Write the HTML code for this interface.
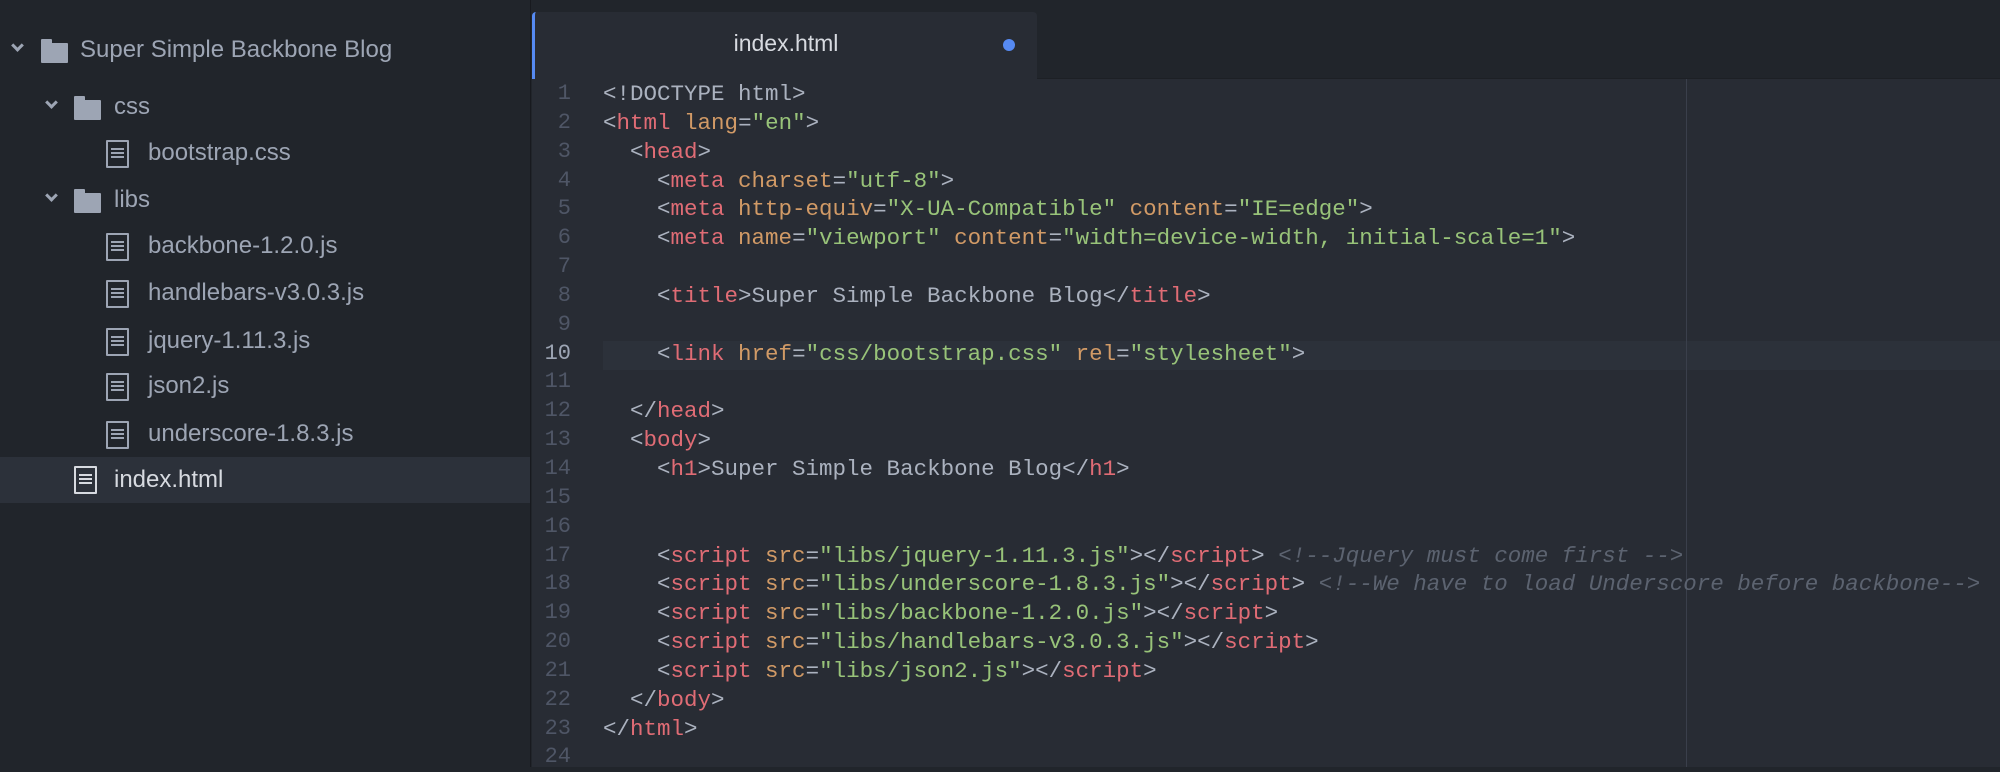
<!DOCTYPE html>
<html><head><meta charset="utf-8"><style>
*{margin:0;padding:0;box-sizing:border-box}
body{width:2000px;height:767px;overflow:hidden;background:#21252b;position:relative;font-family:"Liberation Sans",sans-serif}
#side{position:absolute;left:0;top:0;width:531px;height:767px;background:#21252b;border-right:1px solid #181a1f}
.it{position:absolute;left:0;width:530px;height:46px;color:#9da5b4;font-size:24px;line-height:46px;white-space:nowrap}
.it span{position:absolute}
.sel{background:#2c313a;color:#d7dae0}
.chev{position:absolute;width:9px;height:9px;border-right:3px solid #9da5b4;border-bottom:3px solid #9da5b4;transform:rotate(45deg)}
.fold{position:absolute;width:27px;height:20px;background:#9da5b4;border-radius:1px}
.fold:before{content:"";position:absolute;left:0;top:-4px;width:11px;height:5px;background:#9da5b4;border-radius:1px 1px 0 0}
.file{position:absolute;width:23px;height:28px;border:2px solid #9da5b4;border-radius:1px}
.file:after{content:"";position:absolute;left:3px;right:3px;top:6px;height:12px;background:repeating-linear-gradient(#9da5b4 0 2px,transparent 2px 4px)}
.sel .file{border-color:#d7dae0}.sel .file:after{background:repeating-linear-gradient(#d7dae0 0 2px,transparent 2px 4px)}
#tabbar{position:absolute;left:532px;top:0;right:0;height:79px;background:#21252b;border-bottom:1px solid #1d2025}
#tab{position:absolute;left:532px;top:12px;width:505px;height:68px;background:#282c34;border-radius:4px 4px 0 0;border-left:3px solid #568af2;color:#d7dae0;font-size:23px;text-align:center;line-height:62px}
#dot{position:absolute;left:1003px;top:39px;width:12px;height:12px;border-radius:50%;background:#568af2}
#ed{position:absolute;left:532px;top:79px;right:0;bottom:0;background:#282c34}
#guide{position:absolute;left:1686px;top:79px;width:1px;bottom:0;background:#3a3f4b}
#hl{position:absolute;left:603px;right:0;top:341px;height:29px;background:#2c313a}
#nums{position:absolute;left:532px;width:39px;top:80px;text-align:right;font-family:"Liberation Mono",monospace;font-size:22px;line-height:28.85px;color:#4f5666}
#code{position:absolute;left:603px;top:80px;font-family:"Liberation Mono",monospace;font-size:22.5px;line-height:28.85px;color:#abb2bf;white-space:pre}
.t{color:#e06c75}.a{color:#d19a66}.s{color:#98c379}.c{color:#5c6370;font-style:italic}
</style></head><body>
<div id="side">
 <div class="it" style="top:27px"><div class="chev" style="left:13px;top:14px"></div><div class="fold" style="left:41px;top:16px"></div><span style="left:80px">Super Simple Backbone Blog</span></div>
 <div class="it" style="top:84px"><div class="chev" style="left:47px;top:14px"></div><div class="fold" style="left:74px;top:16px"></div><span style="left:114px">css</span></div>
 <div class="it" style="top:130px"><div class="file" style="left:106px;top:10px"></div><span style="left:148px">bootstrap.css</span></div>
 <div class="it" style="top:177px"><div class="chev" style="left:47px;top:14px"></div><div class="fold" style="left:74px;top:16px"></div><span style="left:114px">libs</span></div>
 <div class="it" style="top:223px"><div class="file" style="left:106px;top:10px"></div><span style="left:148px">backbone-1.2.0.js</span></div>
 <div class="it" style="top:270px"><div class="file" style="left:106px;top:10px"></div><span style="left:148px">handlebars-v3.0.3.js</span></div>
 <div class="it" style="top:318px"><div class="file" style="left:106px;top:10px"></div><span style="left:148px">jquery-1.11.3.js</span></div>
 <div class="it" style="top:363px"><div class="file" style="left:106px;top:10px"></div><span style="left:148px">json2.js</span></div>
 <div class="it" style="top:411px"><div class="file" style="left:106px;top:10px"></div><span style="left:148px">underscore-1.8.3.js</span></div>
 <div class="it sel" style="top:457px"><div class="file" style="left:74px;top:9px"></div><span style="left:114px">index.html</span></div>
</div>
<div id="tabbar"></div>
<div id="tab">index.html</div>
<div id="dot"></div>
<div id="ed"></div>
<div id="hl"></div>
<div id="guide"></div>
<div id="nums">1<br>2<br>3<br>4<br>5<br>6<br>7<br>8<br>9<br><span style="color:#9da5b4">10</span><br>11<br>12<br>13<br>14<br>15<br>16<br>17<br>18<br>19<br>20<br>21<br>22<br>23<br>24</div>
<div id="code">&lt;!DOCTYPE html&gt;
&lt;<span class="t">html</span> <span class="a">lang</span>=<span class="s">"en"</span>&gt;
  &lt;<span class="t">head</span>&gt;
    &lt;<span class="t">meta</span> <span class="a">charset</span>=<span class="s">"utf-8"</span>&gt;
    &lt;<span class="t">meta</span> <span class="a">http-equiv</span>=<span class="s">"X-UA-Compatible"</span> <span class="a">content</span>=<span class="s">"IE=edge"</span>&gt;
    &lt;<span class="t">meta</span> <span class="a">name</span>=<span class="s">"viewport"</span> <span class="a">content</span>=<span class="s">"width=device-width, initial-scale=1"</span>&gt;

    &lt;<span class="t">title</span>&gt;Super Simple Backbone Blog&lt;/<span class="t">title</span>&gt;

    &lt;<span class="t">link</span> <span class="a">href</span>=<span class="s">"css/bootstrap.css"</span> <span class="a">rel</span>=<span class="s">"stylesheet"</span>&gt;

  &lt;/<span class="t">head</span>&gt;
  &lt;<span class="t">body</span>&gt;
    &lt;<span class="t">h1</span>&gt;Super Simple Backbone Blog&lt;/<span class="t">h1</span>&gt;


    &lt;<span class="t">script</span> <span class="a">src</span>=<span class="s">"libs/jquery-1.11.3.js"</span>&gt;&lt;/<span class="t">script</span>&gt; <span class="c">&lt;!--Jquery must come first --&gt;</span>
    &lt;<span class="t">script</span> <span class="a">src</span>=<span class="s">"libs/underscore-1.8.3.js"</span>&gt;&lt;/<span class="t">script</span>&gt; <span class="c">&lt;!--We have to load Underscore before backbone--&gt;</span>
    &lt;<span class="t">script</span> <span class="a">src</span>=<span class="s">"libs/backbone-1.2.0.js"</span>&gt;&lt;/<span class="t">script</span>&gt;
    &lt;<span class="t">script</span> <span class="a">src</span>=<span class="s">"libs/handlebars-v3.0.3.js"</span>&gt;&lt;/<span class="t">script</span>&gt;
    &lt;<span class="t">script</span> <span class="a">src</span>=<span class="s">"libs/json2.js"</span>&gt;&lt;/<span class="t">script</span>&gt;
  &lt;/<span class="t">body</span>&gt;
&lt;/<span class="t">html</span>&gt;
</div>
</body></html>
